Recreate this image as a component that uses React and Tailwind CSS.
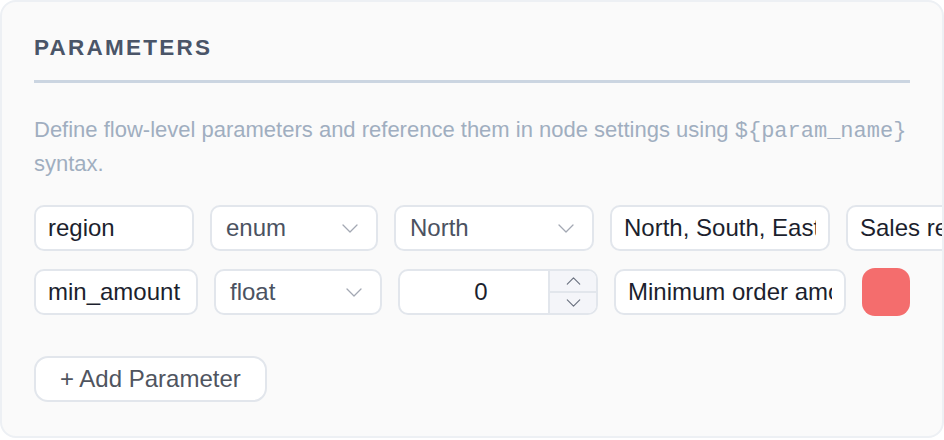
import { useState } from 'react'

const sans = { fontFamily: '"Liberation Sans", Arial, sans-serif' }

function Chevron({ up = false, className = '' }) {
  return (
    <svg viewBox="0 0 16 9" className={className} fill="none" stroke="currentColor" strokeWidth="1.3" strokeLinecap="round" strokeLinejoin="round">
      {up ? <path d="M1 8 L8 1 L15 8" /> : <path d="M1 1 L8 8 L15 1" />}
    </svg>
  )
}

function TextField({ value, width }) {
  return (
    <input
      defaultValue={value}
      style={sans}
      className={`${width} h-[46px] shrink-0 rounded-[10px] border-2 border-[#e2e6ec] bg-white px-[12px] text-[24px] text-[#1c1f2e] outline-none`}
    />
  )
}

function SelectField({ value, width }) {
  return (
    <div className={`${width} h-[46px] shrink-0 flex items-center justify-between rounded-[10px] border-2 border-[#e2e6ec] bg-white pl-[14px] pr-[18px]`}>
      <span className="text-[24px] text-[#4b5261]">{value}</span>
      <Chevron className="w-[16px] h-[9px] text-[#a3a8b3]" />
    </div>
  )
}

function NumberField({ value }) {
  const [n, setN] = useState(value)
  return (
    <div className="w-[200px] h-[46px] shrink-0 flex rounded-[10px] border-2 border-[#e2e6ec] bg-white overflow-hidden">
      <input
        value={n}
        onChange={e => setN(e.target.value)}
        style={sans}
        className="flex-1 min-w-0 pl-[14px] text-center text-[24px] text-[#1c1f2e] outline-none bg-transparent"
      />
      <div className="w-[48px] flex flex-col border-l-2 border-[#e2e6ec] bg-[#f4f5f9]">
        <button onClick={() => setN(Number(n) + 1)} className="flex-1 flex items-center justify-center border-b-2 border-[#e2e6ec]">
          <Chevron up className="w-[15px] h-[8px] text-[#6b7280]" />
        </button>
        <button onClick={() => setN(Number(n) - 1)} className="flex-1 flex items-center justify-center">
          <Chevron className="w-[15px] h-[8px] text-[#6b7280]" />
        </button>
      </div>
    </div>
  )
}

export default function App() {
  return (
    <div className="w-[944px] h-[440px] overflow-hidden bg-white" style={sans}>
      <div className="h-[438px] rounded-[16px] border-2 border-[#edf0f4] bg-[#fafafa] overflow-hidden pt-[32px] pl-[32px] pr-[32px]">
        {/* Header */}
        <div className="pb-[18px] border-b-[3px] border-[#cbd5e1]">
          <h2 className="text-[22.5px] leading-[28px] font-bold tracking-[0.1em] text-[#4a5568] uppercase">Parameters</h2>
        </div>

        <p className="mt-[31px] text-[22px] leading-[32px] text-[#a0aec0]">
          Define flow-level parameters and reference them in node settings using{' '}
          <code style={{ fontFamily: '"Liberation Mono", monospace' }}>{'${param_name}'}</code> syntax.
        </p>

        {/* Rows */}
        <div className="mt-[25px] flex flex-col gap-[18px]">
          <div className="flex gap-[16px]">
            <TextField value="region" width="w-[160px]" />
            <SelectField value="enum" width="w-[168px]" />
            <SelectField value="North" width="w-[200px]" />
            <TextField value="North, South, East, West" width="w-[220px]" />
            <TextField value="Sales region" width="w-[220px]" />
          </div>
          <div className="flex gap-[16px]">
            <TextField value="min_amount" width="w-[164px]" />
            <SelectField value="float" width="w-[168px]" />
            <NumberField value="0" />
            <TextField value="Minimum order amount" width="w-[232px]" />
            <button className="w-[48px] h-[48px] -mt-[1px] shrink-0 rounded-[13px] bg-[#f46d6d]" />
          </div>
        </div>

        <button className="mt-[40px] h-[46px] px-[24px] rounded-[14px] border-2 border-[#e2e6ec] bg-white text-[24px] text-[#50555f]">
          + Add Parameter
        </button>
      </div>
    </div>
  )
}
